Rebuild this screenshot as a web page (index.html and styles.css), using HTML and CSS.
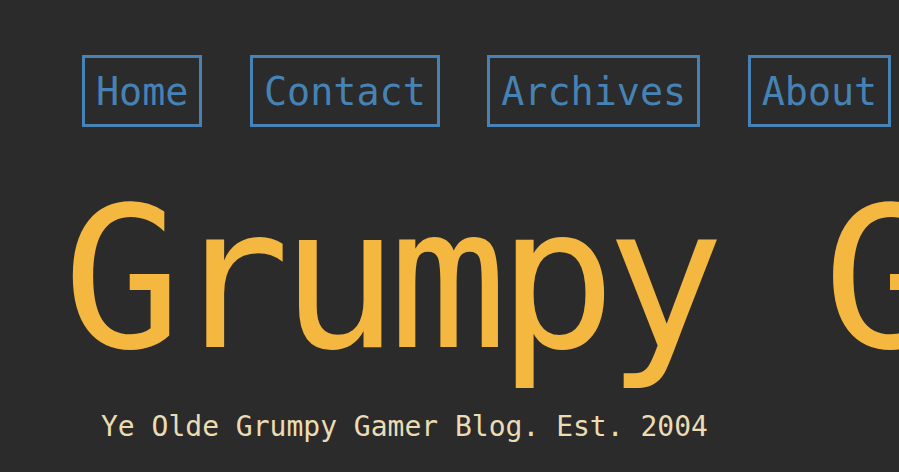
FILE: index.html
```html
<!DOCTYPE html>
<html lang="en">
<head>
    <meta charset="UTF-8">
    <meta name="viewport" content="width=device-width, initial-scale=1.0">
    <title>Grumpy Gamer</title>
    <link rel="stylesheet" href="styles.css">
</head>
<body>
    <header class="site-header">
        <nav class="menu">
            <a href="#">Home</a>
            <a href="#">Contact</a>
            <a href="#">Archives</a>
            <a href="#">About</a>
        </nav>
        <h1 class="title">Grumpy Gamer</h1>
        <p class="tagline">Ye Olde Grumpy Gamer Blog. Est. 2004</p>
    </header>
</body>
</html>
```

FILE: styles.css
```css
body {
    font-family: "DejaVu Sans Mono", monospace;
    background-color: #2b2b2b;
    margin: 0;
    padding: 0;
    overflow: hidden;
}

.site-header {
    padding: 55px 0 0 58px;
    white-space: nowrap;
}

.menu {
    display: flex;
    gap: 47.5px;
    margin-left: 24px;
}

.menu a {
    font-size: 38.4px;
    color: steelblue;
    text-decoration: none;
    border: 3px solid steelblue;
    padding: 11px 11px 10px;
}

.title {
    font-size: 197px;
    font-weight: normal;
    letter-spacing: -10px;
    color: #f4b73f;
    margin: 37px 0 0 5px;
}

.tagline {
    font-size: 28px;
    color: #ecdcb4;
    margin: 17px 0 0 43px;
}
```
